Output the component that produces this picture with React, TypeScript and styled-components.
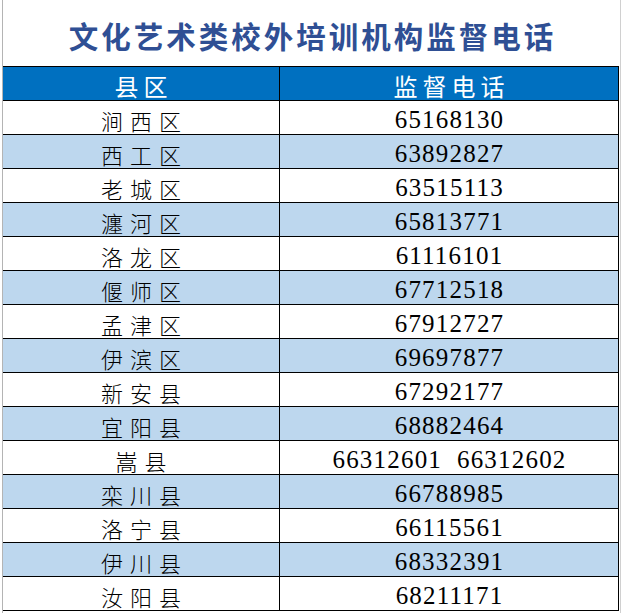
import React from "react";
import styled, { createGlobalStyle } from "styled-components";

const GlobalStyle = createGlobalStyle`
  html, body { margin: 0; padding: 0; background: #ffffff; }
  body { font-family: "Noto Sans CJK SC", sans-serif; }
`;

const Sheet = styled.div`
  width: 619px;
  height: 613px;
  margin-left: 2px;
  box-sizing: border-box;
  border-left: 1px solid #b4b4b4;
  border-right: 1px solid #d0d0d0;
  display: flex;
  flex-direction: column;
`;

const Title = styled.h1`
  margin: 0;
  height: 66px;
  width: 616px;
  box-sizing: border-box;
  padding-top: 4px;
  padding-left: 3px;
  display: flex;
  align-items: center;
  justify-content: center;
  font-family: "Noto Sans CJK SC", sans-serif;
  font-weight: 700;
  font-size: 29.5px;
  letter-spacing: 3px;
  color: #2f4f94;
`;

const Table = styled.div`
  width: 616px;
  border-top: 1px solid #000;
  display: grid;
  grid-template-columns: 277px 339px;
`;

const Cell = styled.div<{ $alt?: boolean }>`
  height: 34px;
  box-sizing: border-box;
  border-right: 1px solid #000;
  border-bottom: 1px solid #000;
  background: ${(p) => (p.$alt ? "#bdd7ee" : "#ffffff")};
  color: #000000;
  display: flex;
  align-items: center;
  justify-content: center;
  white-space: pre;
  padding-top: 4px;
  line-height: 1;
`;

const HeadCell = styled(Cell)`
  background: #0070c0;
  color: #ffffff;
  font-family: "Noto Sans CJK SC", sans-serif;
  font-size: 24px;
  font-weight: 400;
  letter-spacing: 5px;
  text-indent: 5px;
  padding-top: 5px;
`;

const NameCell = styled(Cell)`
  font-family: "Noto Sans CJK SC", sans-serif;
  font-size: 22px;
  font-weight: 300;
  letter-spacing: 7px;
  text-indent: 7px;
`;

const PhoneCell = styled(Cell)`
  font-family: "Liberation Serif", "Times New Roman", serif;
  font-size: 25px;
  font-weight: 400;
  letter-spacing: 1.2px;
  text-indent: 1px;
`;

const rows: [string, string][] = [
  ["涧西区", "65168130"],
  ["西工区", "63892827"],
  ["老城区", "63515113"],
  ["瀍河区", "65813771"],
  ["洛龙区", "61116101"],
  ["偃师区", "67712518"],
  ["孟津区", "67912727"],
  ["伊滨区", "69697877"],
  ["新安县", "67292177"],
  ["宜阳县", "68882464"],
  ["嵩县", "66312601  66312602"],
  ["栾川县", "66788985"],
  ["洛宁县", "66115561"],
  ["伊川县", "68332391"],
  ["汝阳县", "68211171"],
];

export default function App() {
  return (
    <>
      <GlobalStyle />
      <Sheet>
        <Title>文化艺术类校外培训机构监督电话</Title>
        <Table>
          <HeadCell>县区</HeadCell>
          <HeadCell>监督电话</HeadCell>
          {rows.map(([name, phone], i) => (
            <React.Fragment key={name}>
              <NameCell $alt={i % 2 === 1}>{name}</NameCell>
              <PhoneCell $alt={i % 2 === 1}>{phone}</PhoneCell>
            </React.Fragment>
          ))}
        </Table>
      </Sheet>
    </>
  );
}
